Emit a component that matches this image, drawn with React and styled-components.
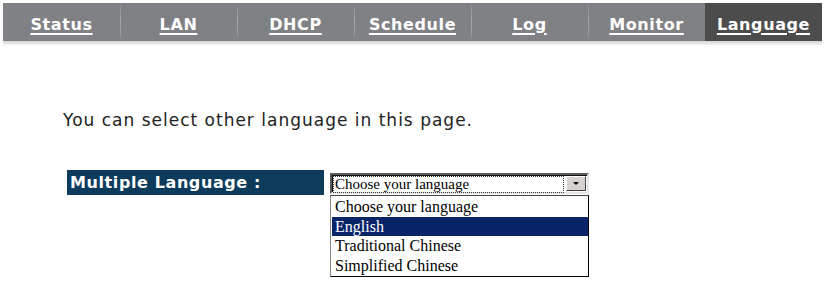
import React from "react";
import styled, { createGlobalStyle } from "styled-components";

const tabs = ["Status", "LAN", "DHCP", "Schedule", "Log", "Monitor", "Language"];
const languages = ["Choose your language", "English", "Traditional Chinese", "Simplified Chinese"];

const App = () => {
  return (
    <>
      <GlobalStyle />
      <Page>
        <NavWrap>
          <NavBar>
            {tabs.map((tab, i) => (
              <Tab key={tab} active={tab === "Language"} first={i === 0}>
                <TabLink>{tab}</TabLink>
              </Tab>
            ))}
          </NavBar>
          <NavShadow />
        </NavWrap>

        <Intro>You can select other language in this page.</Intro>

        <FormRow>
          <Label>Multiple Language :</Label>
          <SelectBox>
            <Select>
              <SelectValue>
                <FocusText>Choose your language</FocusText>
              </SelectValue>
              <ArrowButton>
                <Arrow />
              </ArrowButton>
            </Select>
            <OptionList>
              {languages.map((lang) => (
                <Option key={lang} selected={lang === "English"}>
                  {lang}
                </Option>
              ))}
            </OptionList>
          </SelectBox>
        </FormRow>
      </Page>
    </>
  );
};

export default App;

const GlobalStyle = createGlobalStyle`
  body {
    margin: 0;
    background: #ffffff;
  }
`;

const Page = styled.div`
  width: 826px;
  height: 283px;
  overflow: hidden;
  background: #ffffff;
`;

const NavWrap = styled.div`
  padding: 3px 0 0 3px;
`;

const NavBar = styled.div`
  display: flex;
  width: 819px;
  height: 38px;
  background: #808184;
`;

const NavShadow = styled.div`
  width: 819px;
  height: 4px;
  background: linear-gradient(#d2d3d4, #f4f4f4);
`;

const Tab = styled.div`
  position: relative;
  flex: 0 0 117px;
  display: flex;
  align-items: center;
  justify-content: center;
  background: ${({ active }) => (active ? "#4c4c4c" : "transparent")};
  &::before {
    content: "";
    display: ${({ first, active }) => (first || active ? "none" : "block")};
    position: absolute;
    left: 0;
    top: 3px;
    bottom: 3px;
    width: 1px;
    background: linear-gradient(#8e8f91, #a9aaac 50%, #8e8f91);
  }
`;

const TabLink = styled.span`
  font-family: "DejaVu Sans", Verdana, sans-serif;
  font-weight: bold;
  font-size: 16px;
  letter-spacing: 0.6px;
  color: #ffffff;
  text-decoration: underline;
  text-underline-offset: 3px;
  text-decoration-thickness: 2px;
  margin-top: 4px;
`;

const Intro = styled.p`
  margin: 64px 0 0 63px;
  font-family: "DejaVu Sans", Verdana, sans-serif;
  font-size: 17px;
  letter-spacing: 1px;
  line-height: 22px;
  color: #222222;
`;

const FormRow = styled.div`
  display: flex;
  align-items: flex-start;
  margin: 39px 0 0 67px;
`;

const Label = styled.div`
  width: 257px;
  height: 25px;
  padding-left: 3px;
  box-sizing: border-box;
  background: #0d3b5b;
  color: #ffffff;
  font-family: "DejaVu Sans", Verdana, sans-serif;
  font-weight: bold;
  font-size: 16px;
  letter-spacing: 0.6px;
  line-height: 25px;
`;

const SelectBox = styled.div`
  margin: 3px 0 0 6px;
  width: 259px;
`;

const Select = styled.div`
  display: flex;
  height: 21px;
  box-sizing: border-box;
  border: 2px solid;
  border-color: #5a5a5a #e6e6e6 #e6e6e6 #5a5a5a;
  box-shadow: inset 1px 1px 0 #111111;
  background: #ffffff;
`;

const SelectValue = styled.div`
  flex: 1;
  padding: 1px 0 0 1px;
`;

const FocusText = styled.div`
  height: 15px;
  border: 1px dotted #333333;
  font-family: "Liberation Serif", "Times New Roman", serif;
  font-size: 15px;
  line-height: 15px;
  color: #000000;
  padding-left: 1px;
`;

const ArrowButton = styled.div`
  width: 20px;
  margin: 1px 1px 1px 2px;
  box-sizing: border-box;
  background: #d6d3ce;
  border: 1px solid;
  border-color: #ffffff #404040 #404040 #ffffff;
  display: flex;
  align-items: center;
  justify-content: center;
`;

const Arrow = styled.span`
  width: 0;
  height: 0;
  border-left: 3px solid transparent;
  border-right: 3px solid transparent;
  border-top: 3px solid #000000;
`;

const OptionList = styled.div`
  margin-top: 1px;
  border: 1px solid #000000;
  border-top-color: #444444;
  border-left-color: #888888;
  background: #ffffff;
  padding: 1px 0 1px 1px;
`;

const Option = styled.div`
  height: 19.5px;
  padding-left: 3px;
  font-family: "Liberation Serif", "Times New Roman", serif;
  font-size: 16px;
  line-height: 19.5px;
  color: ${({ selected }) => (selected ? "#ffffff" : "#000000")};
  background: ${({ selected }) => (selected ? "#0a246a" : "transparent")};
`;
